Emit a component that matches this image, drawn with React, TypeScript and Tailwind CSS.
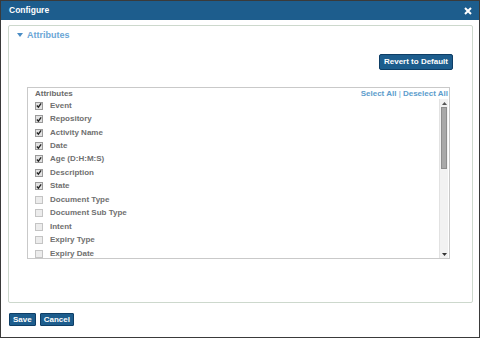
import React from "react"

const attributes = [
  { name: "Event", checked: true },
  { name: "Repository", checked: true },
  { name: "Activity Name", checked: true },
  { name: "Date", checked: true },
  { name: "Age (D:H:M:S)", checked: true },
  { name: "Description", checked: true },
  { name: "State", checked: true },
  { name: "Document Type", checked: false },
  { name: "Document Sub Type", checked: false },
  { name: "Intent", checked: false },
  { name: "Expiry Type", checked: false },
  { name: "Expiry Date", checked: false },
]

function Checkbox({ checked }: { checked: boolean }) {
  return (
    <span
      className={
        checked
          ? "w-[8px] h-[8px] border border-[#9a9a9a] bg-[#e2e2e2] flex items-center justify-center"
          : "w-[8px] h-[8px] border border-[#c4c4c4] bg-[#ececec]"
      }
    >
      {checked && (
        <svg width="7" height="7" viewBox="0 0 7 7">
          <path d="M1 3.5 L2.8 5.5 L6 1" fill="none" stroke="#222" strokeWidth="1.6" />
        </svg>
      )}
    </span>
  )
}

export default function App() {
  return (
    <div
      className="w-[480px] h-[338px] border border-[#3a3a3a] bg-white flex flex-col overflow-hidden"
      style={{ fontFamily: '"Liberation Sans", Arial, sans-serif' }}
    >
      {/* Title bar */}
      <div className="h-[19px] bg-[#1d5d8d] flex items-center justify-between pl-[8px] pr-[7px] shrink-0">
        <span className="text-white font-bold text-[8.5px]">Configure</span>
        <svg width="8" height="8" viewBox="0 0 8 8">
          <path d="M1 1 L7 7 M7 1 L1 7" stroke="#fff" strokeWidth="2" />
        </svg>
      </div>

      {/* Body */}
      <div className="pt-[5px] pl-[7px] pr-[6px]">
        <div className="h-[278px] border border-[#cdd8cd] rounded-[2px] flex flex-col">
          <div className="flex items-center h-[15px] mt-[2px] pl-[8px] gap-[4px]">
            <svg width="6" height="5" viewBox="0 0 6 5">
              <path d="M0 0 L6 0 L3 4 Z" fill="#4a8cc4" />
            </svg>
            <span className="text-[9px] font-bold text-[#6aa6d6]">Attributes</span>
          </div>

          <div className="flex justify-end pr-[19px] mt-[11px]">
            <button className="h-[16px] px-[4px] bg-[#1d5d8d] border border-[#0e3e66] rounded-[2px] text-white text-[8px] font-bold leading-none">
              Revert to Default
            </button>
          </div>

          {/* List */}
          <div className="ml-[18px] mr-[22px] mt-[17px] h-[172px] border border-[#c9c9c9] flex flex-col overflow-hidden">
            <div className="h-[11px] flex items-center justify-between pl-[7px] pr-[1px] shrink-0">
              <span className="text-[8px] font-bold text-[#6a6a6a]">Attributes</span>
              <span className="text-[8px] font-bold text-[#5c9ccc]">
                Select All <span className="font-normal">|</span> Deselect All
              </span>
            </div>
            <div className="flex flex-1 min-h-0">
              <div className="flex-1 overflow-hidden">
                {attributes.map((a) => (
                  <div key={a.name} className="h-[13.45px] flex items-center pl-[7px] gap-[7px]">
                    <Checkbox checked={a.checked} />
                    <span className="text-[8px] font-bold text-[#707070]">{a.name}</span>
                  </div>
                ))}
              </div>
              <div className="w-[9px] flex flex-col bg-[#f2f2f2] border-l border-[#e2e2e2] mr-[1px]">
                <div className="h-[8px] flex items-center justify-center">
                  <svg width="5" height="3" viewBox="0 0 5 3">
                    <path d="M0 3 L2.5 0 L5 3 Z" fill="#555" />
                  </svg>
                </div>
                <div className="h-[62px] bg-[#a9a9a9] border border-[#8e8e8e] mx-[1px]" />
                <div className="flex-1" />
                <div className="h-[8px] flex items-center justify-center">
                  <svg width="5" height="3" viewBox="0 0 5 3">
                    <path d="M0 0 L2.5 3 L5 0 Z" fill="#333" />
                  </svg>
                </div>
              </div>
            </div>
          </div>
        </div>
      </div>

      {/* Footer */}
      <div className="flex gap-[4px] pl-[8px] mt-[10px]">
        <button className="h-[13px] px-[3px] bg-[#1d5d8d] border border-[#0e3e66] rounded-[1px] text-white text-[8px] font-bold leading-none">
          Save
        </button>
        <button className="h-[13px] px-[3px] bg-[#1d5d8d] border border-[#0e3e66] rounded-[1px] text-white text-[8px] font-bold leading-none">
          Cancel
        </button>
      </div>
    </div>
  )
}
